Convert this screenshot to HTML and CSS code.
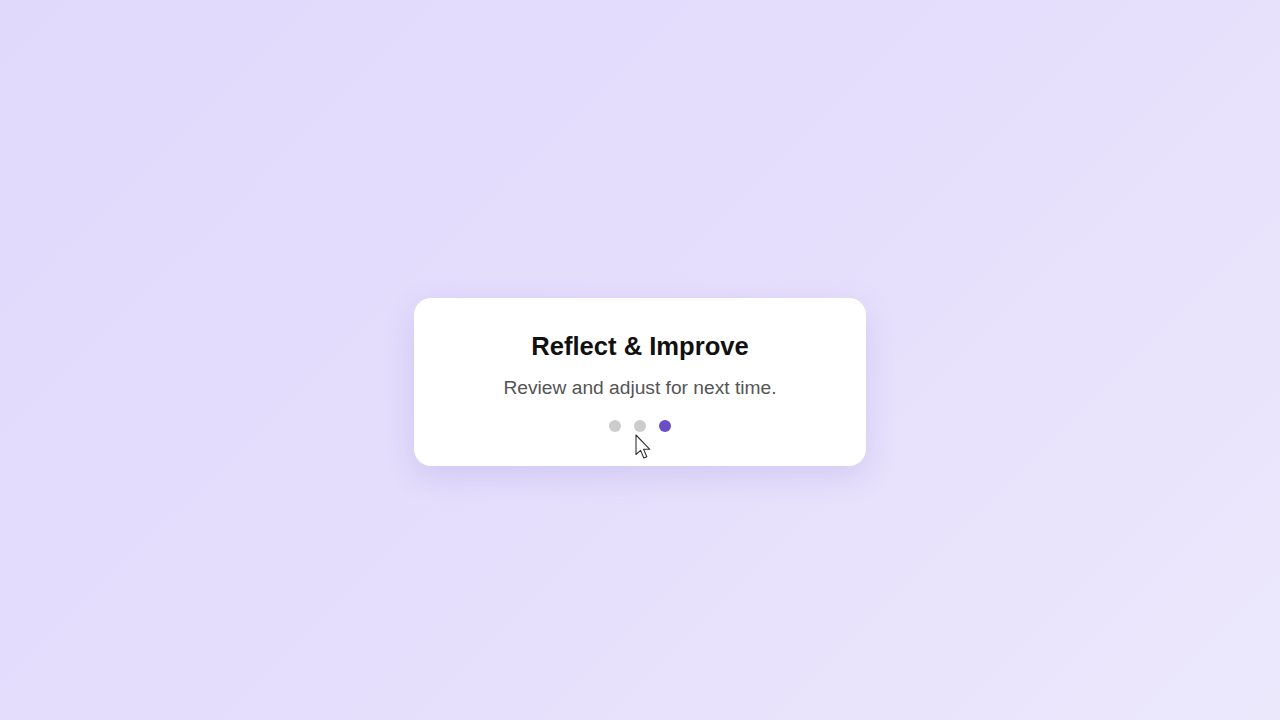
FILE: index.html
```html
<!DOCTYPE html>
<html lang="en">
<head>
<meta charset="utf-8">
<title>Reflect &amp; Improve</title>
<link rel="stylesheet" href="styles.css">
</head>
<body>
<main class="stage">
  <section class="card">
    <h2 class="title">Reflect &amp; Improve</h2>
    <p class="subtitle">Review and adjust for next time.</p>
    <div class="dots">
      <span class="dot"></span>
      <span class="dot dot-cursor">
        <svg class="cursor" width="18" height="27" viewBox="0 0 18 27" aria-hidden="true">
          <path d="M1 1 L1 20.5 L5.6 16.4 L8.8 24 L11.8 22.7 L8.6 15.3 L14.8 15.3 Z" fill="#ffffff" stroke="#333" stroke-width="1.1" stroke-linejoin="round"/>
        </svg>
      </span>
      <span class="dot dot-active"></span>
    </div>
  </section>
</main>
</body>
</html>
```

FILE: styles.css
```css
* { box-sizing: border-box; }

html, body {
  margin: 0;
  height: 100%;
}

body {
  font-family: "Liberation Sans", Arial, sans-serif;
  background: linear-gradient(135deg, #e0d9fc 0%, #e5defc 50%, #ece8fc 100%);
}

.stage {
  height: 720px;
  display: flex;
  align-items: center;
  justify-content: center;
  padding-top: 44px;
}

.card {
  width: 452px;
  background: #ffffff;
  border-radius: 17px;
  padding: 34px 20px 34px;
  text-align: center;
  box-shadow: 0 10px 30px rgba(120, 100, 200, 0.18);
}

.title {
  margin: 0;
  font-size: 25.6px;
  line-height: 29px;
  font-weight: 700;
  color: #111;
}

.subtitle {
  margin: 16px 0 0;
  font-size: 19.2px;
  line-height: 22px;
  color: #555;
}

.dots {
  margin-top: 21px;
  display: flex;
  justify-content: center;
  gap: 12.2px;
}

.dot {
  position: relative;
  width: 12.8px;
  height: 12.8px;
  border-radius: 50%;
  background: #cccccc;
}

.dot-active {
  background: #6a4fc4;
}

.cursor {
  position: absolute;
  left: 1.5px;
  top: 14px;
}
```
